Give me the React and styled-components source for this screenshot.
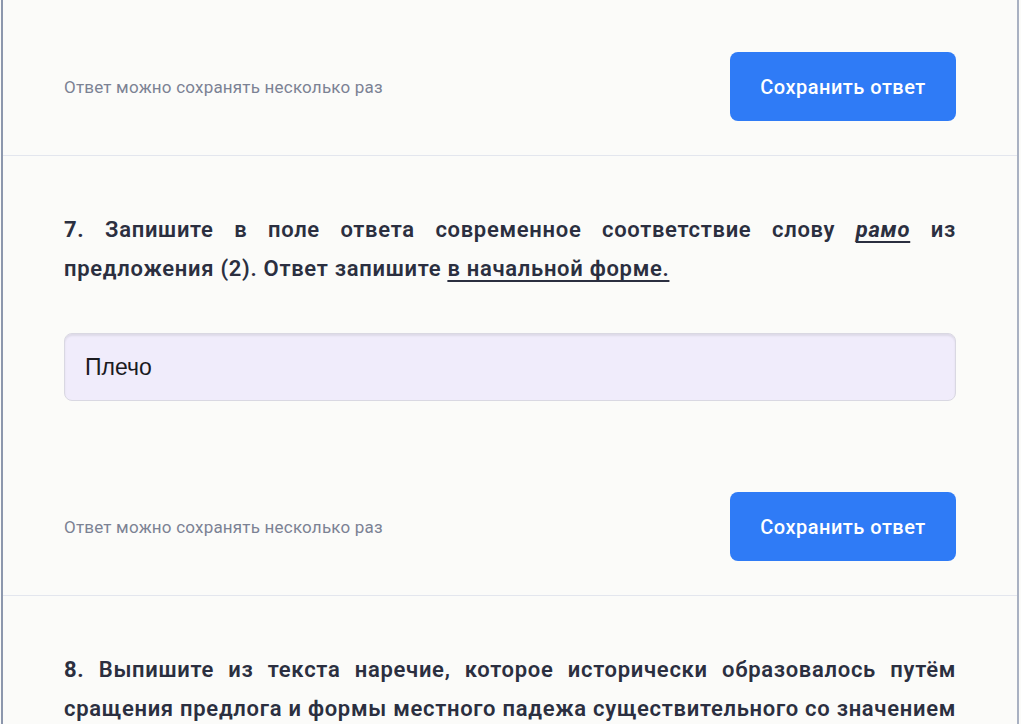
import React, { useState } from 'react';
import styled, { createGlobalStyle } from 'styled-components';

const GlobalStyle = createGlobalStyle`
  html, body {
    margin: 0;
    padding: 0;
    background: #fbfbf9;
    overflow: hidden;
  }
  * {
    box-sizing: border-box;
  }
`;

const Page = styled.div`
  margin: 0 2px 0 1px;
  height: 724px;
  border-left: 2px solid #8c97ad;
  border-right: 2px solid #a9b1c2;
  background: #fbfbf9;
  font-family: Roboto, 'Noto Sans', sans-serif;
`;

const Section = styled.section`
  padding: 54px 61px 34px 61px;
  border-bottom: 1px solid #e3e6ee;
`;

const TopSection = styled(Section)`
  padding-top: 52px;
`;

const Footer = styled.div`
  display: flex;
  align-items: center;
  justify-content: space-between;
`;

const Note = styled.span`
  font-size: 17px;
  color: #7b8294;
  letter-spacing: 0.2px;
`;

const SaveButton = styled.button`
  width: 226px;
  height: 69px;
  border: none;
  border-radius: 8px;
  background: #2f7bf6;
  color: #fff;
  font-family: inherit;
  font-size: 20px;
  font-weight: 500;
  letter-spacing: 0.5px;
  cursor: pointer;
`;

const Task = styled.p`
  margin: 0 0 45px;
  font-size: 22px;
  line-height: 39px;
  font-weight: 600;
  letter-spacing: 0.7px;
  color: #2b2f40;
  text-align: justify;
`;

const Num = styled.b`
  font-weight: 700;
`;

const Word = styled.i`
  font-weight: 700;
  text-decoration: underline;
  text-decoration-thickness: 1.5px;
  text-underline-offset: 4px;
`;

const Hint = styled.span`
  text-decoration: underline;
  text-decoration-thickness: 1.5px;
  text-underline-offset: 4px;
`;

const AnswerInput = styled.input`
  display: block;
  width: 100%;
  height: 68px;
  margin-bottom: 91px;
  padding: 0 20px;
  border: 1px solid #d9d8e2;
  border-radius: 8px;
  background: #f0ecfb;
  box-shadow: inset 0 2px 2px rgba(0, 0, 0, 0.08);
  font-family: 'Liberation Sans', Arial, sans-serif;
  font-size: 23px;
  color: #1b1b1f;
  outline: none;
`;

const questions = [
  {
    id: 7,
    answer: 'Плечо',
    body: (
      <>
        Запишите в поле ответа современное соответствие слову <Word>рамо</Word> из предложения (2).
        Ответ запишите <Hint>в начальной форме.</Hint>
      </>
    ),
  },
  {
    id: 8,
    answer: '',
    body: (
      <>
        Выпишите из текста наречие, которое исторически образовалось путём сращения предлога и
        формы местного падежа существительного со значением места. Ответ запишите без пробелов.
      </>
    ),
  },
];

function SaveFooter() {
  return (
    <Footer>
      <Note>Ответ можно сохранять несколько раз</Note>
      <SaveButton type="button">Сохранить ответ</SaveButton>
    </Footer>
  );
}

function Question({ q }) {
  const [value, setValue] = useState(q.answer);
  return (
    <Section>
      <Task>
        <Num>{q.id}.</Num> {q.body}
      </Task>
      <AnswerInput value={value} onChange={(e) => setValue(e.target.value)} />
      <SaveFooter />
    </Section>
  );
}

export default function App() {
  return (
    <>
      <GlobalStyle />
      <Page>
        <TopSection>
          <SaveFooter />
        </TopSection>
        {questions.map((q) => (
          <Question key={q.id} q={q} />
        ))}
      </Page>
    </>
  );
}
